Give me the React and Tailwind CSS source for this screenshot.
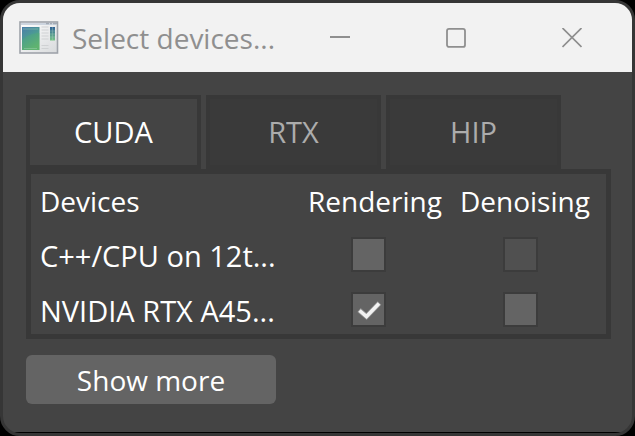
import React, { useState } from "react";

const tabs = ["CUDA", "RTX", "HIP"];

const initialDevices = [
  { id: "cpu", name: "C++/CPU on 12t...", rendering: false, denoising: false, canDenoise: false },
  { id: "gpu", name: "NVIDIA RTX A45...", rendering: true, denoising: false, canDenoise: true },
];

const AppIcon = () => (
  <svg className="shrink-0" width="40" height="34" viewBox="0 0 40 34" aria-hidden="true">
    <defs>
      <linearGradient id="screen" x1="0" y1="0" x2="0.5" y2="1">
        <stop offset="0" stopColor="#4a7cab" />
        <stop offset="0.5" stopColor="#4c9a94" />
        <stop offset="1" stopColor="#66b66e" />
      </linearGradient>
      <linearGradient id="strip" x1="0" y1="0" x2="0" y2="1">
        <stop offset="0" stopColor="#2f6296" />
        <stop offset="1" stopColor="#76c486" />
      </linearGradient>
      <linearGradient id="frame" x1="0" y1="0" x2="1" y2="1">
        <stop offset="0" stopColor="#ffffff" />
        <stop offset="1" stopColor="#d8dadc" />
      </linearGradient>
    </defs>
    <rect x="1" y="1" width="37.5" height="31" fill="url(#frame)" stroke="#9fa3aa" strokeWidth="1.6" />
    <rect x="2" y="2" width="36" height="2" fill="#cdd5df" />
    <path d="M27 2.5h3M31 2.5h2M34 2.5h4" stroke="#a3abb5" strokeWidth="1.6" />
    <rect x="3" y="6" width="17.5" height="23" fill="url(#screen)" />
    <path d="M3 19C8 14.5 14 12 20.5 12V29H3Z" fill="#52b074" opacity="0.35" />
    <path d="M4 8h15M5 27.5h13" stroke="#9fd0b4" strokeWidth="0.8" opacity="0.6" />
    <path d="M22.5 6h7M22.5 9h7M22.5 12h7M22.5 15h7M22.5 18h7M22.5 24.5h7M22.5 27.5h7" stroke="#cfd1d3" strokeWidth="1.2" />
    <rect x="31" y="6" width="5" height="13.5" fill="url(#strip)" />
    <path d="M31 10h5M31 13h5M31 16h5M33.5 6v13" stroke="#b9dccb" strokeWidth="0.5" opacity="0.6" />
  </svg>
);

const TitleBar = () => (
  <header className="flex h-[69px] items-center bg-[#f2f2f2] pr-0.5 pl-4 text-[#8f8f8f]">
    <AppIcon />
    <h1 className="min-w-0 flex-1 pl-[13px] whitespace-nowrap">Select devices...</h1>
    <button type="button" aria-label="Minimize" className="flex h-full w-[116px] shrink-0 items-center justify-center">
      <svg width="20" height="20" viewBox="0 0 20 20">
        <path d="M0 9h20" stroke="currentColor" strokeWidth="2" />
      </svg>
    </button>
    <button type="button" aria-label="Maximize" className="flex h-full w-[116px] shrink-0 items-center justify-center">
      <svg width="20" height="20" viewBox="0 0 20 20" fill="none">
        <rect x="1" y="0.9" width="18" height="18" rx="2" stroke="currentColor" strokeWidth="1.8" />
      </svg>
    </button>
    <button type="button" aria-label="Close" className="flex h-full w-[116px] shrink-0 items-center justify-center">
      <svg width="20" height="20" viewBox="0 0 20 20">
        <path d="M0.5 0l19 19M19.5 0l-19 19" stroke="currentColor" strokeWidth="1.7" />
      </svg>
    </button>
  </header>
);

const CheckBox = ({ label, checked, disabled, onChange }) => (
  <span className="relative block size-[35px]">
    <input
      type="checkbox"
      aria-label={label}
      checked={checked}
      disabled={disabled}
      onChange={onChange}
      className="block size-[35px] appearance-none border-2 border-[#3c3c3c] bg-[#646464] disabled:bg-[#505050]"
    />
    {checked && (
      <svg className="pointer-events-none absolute inset-0" width="35" height="35" viewBox="0 0 35 35" fill="none">
        <path d="M8 18l7.5 6.5L28.5 11" stroke="#c8c8c8" strokeWidth="5" opacity="0.45" />
        <path d="M8.5 18.5l7 6L28 11.5" stroke="#f2f2f2" strokeWidth="3.6" />
      </svg>
    )}
  </span>
);

const App = () => {
  const [active, setActive] = useState("CUDA");
  const [devices, setDevices] = useState(initialDevices);

  const toggle = (id, key) =>
    setDevices(devices.map((d) => (d.id === id ? { ...d, [key]: !d[key] } : d)));

  return (
    <div className="flex min-h-screen bg-black font-['Open_Sans','Noto_Sans',sans-serif] text-[28px] leading-[38px] text-white">
      <div className="flex flex-1 flex-col overflow-hidden rounded-[20px] border-[3px] border-[#363636] bg-[#444444]">
        <TitleBar />

        <main className="flex-1 border-b border-black pt-[23px] pr-[21px] pb-7 pl-[23px]">
          <div role="tablist" className="flex gap-[5px] text-[29px]">
            {tabs.map((tab) => (
              <button
                key={tab}
                type="button"
                role="tab"
                aria-selected={active === tab}
                onClick={() => setActive(tab)}
                className={
                  active === tab
                    ? "h-[74px] w-[175px] border-4 border-[#383838] bg-[#444444] text-white"
                    : "h-[74px] w-[175px] border-4 border-[#383838] bg-[#3a3a3a] text-[#acacac]"
                }
              >
                {tab}
              </button>
            ))}
          </div>

          <div className="border-[5px] border-[#383838]">
            <table className="w-full table-fixed">
              <thead>
                <tr className="h-[55px] text-left align-top">
                  <th scope="col" className="pt-2 pl-[9px] font-normal">Devices</th>
                  <th scope="col" className="w-[152px] pt-2 pl-0.5 font-normal">Rendering</th>
                  <th scope="col" className="w-[148px] pt-2 pl-0.5 font-normal">Denoising</th>
                </tr>
              </thead>
              <tbody>
                {devices.map((d) => (
                  <tr key={d.id} className="h-[55px] align-top last:h-[50px]">
                    <td className="truncate pt-2 pl-[9px] text-[29px]">{d.name}</td>
                    <td className="pt-2 pl-[45px]">
                      <CheckBox
                        label={`${d.name} rendering`}
                        checked={d.rendering}
                        onChange={() => toggle(d.id, "rendering")}
                      />
                    </td>
                    <td className="pt-2 pl-[45px]">
                      <CheckBox
                        label={`${d.name} denoising`}
                        checked={d.denoising}
                        disabled={!d.canDenoise}
                        onChange={() => toggle(d.id, "denoising")}
                      />
                    </td>
                  </tr>
                ))}
              </tbody>
            </table>
          </div>

          <button type="button" className="mt-4 h-[49px] w-[250px] rounded-md bg-[#646464]">
            Show more
          </button>
        </main>
      </div>
    </div>
  );
};

export default App;
